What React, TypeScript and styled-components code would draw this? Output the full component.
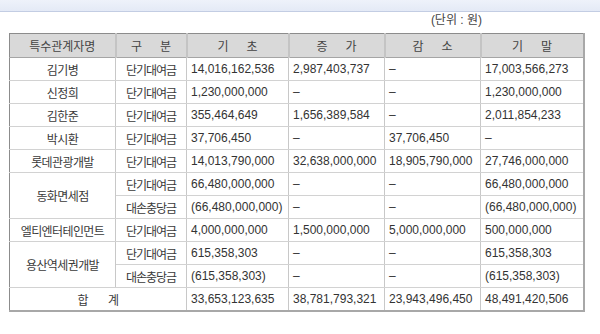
import React from "react";
import styled, { createGlobalStyle } from "styled-components";

const GlobalStyle = createGlobalStyle`
  body {
    margin: 0;
    background: #fff;
    font-family: "Liberation Sans", "Noto Sans CJK KR", sans-serif;
    color: #333;
  }
`;

const Page = styled.div`
  width: 600px;
  height: 334px;
  display: flex;
  flex-direction: column;
`;

const TopBand = styled.div`
  height: 11px;
  background: linear-gradient(#eef2fa, #e4eaf6);
  border-bottom: 1px solid #c3cde3;
`;

const Unit = styled.div`
  display: flex;
  justify-content: flex-end;
  padding: 1px 118px 0 0;
  height: 20px;
  font-size: 12px;
  line-height: 14px;
  color: #444;
`;

const Table = styled.table`
  margin-left: 9px;
  width: 574px;
  border-collapse: collapse;
  table-layout: fixed;
  font-size: 12px;
  border-top: 1px solid #8c8c8c;
  border-left: 1px solid #8c8c8c;
  border-right: 2px solid #a8a8a8;
  border-bottom: 2px solid #a8a8a8;
`;

const Th = styled.th`
  height: 23px;
  padding: 0;
  background: #d9d9d9;
  font-weight: normal;
  color: #444;
  border-bottom: 1px solid #a5a5a5;
  border-right: 2px solid #c4c4c4;
  &:last-child {
    border-right: none;
  }
`;

// spaced-out header words like "구   분"
const Spread = styled.span<{ $gap: number }>`
  display: flex;
  justify-content: center;
  gap: ${(p) => p.$gap}px;
`;

const Td = styled.td`
  height: 22px;
  padding: 0 0 0 4px;
  text-align: left;
  border-right: 1px solid #c8c8c8;
  border-bottom: 1px solid #d2d2d2;
  white-space: pre;
  color: #333;
  &:last-child {
    border-right: none;
  }
`;

const NameTd = styled(Td)`
  padding: 0;
  text-align: center;
  letter-spacing: -0.6px;
  color: #3a3a3a;
`;

const KindTd = styled(Td)`
  padding: 0;
  text-align: center;
  letter-spacing: -1px;
  color: #3a3a3a;
`;

type Row = {
  name?: string;
  span?: number;
  kind: string;
  vals: string[];
};

const D = "–";

const rows: Row[] = [
  { name: "김기병", kind: "단기대여금", vals: ["14,016,162,536", "2,987,403,737", D, "17,003,566,273"] },
  { name: "신정희", kind: "단기대여금", vals: ["1,230,000,000", D, D, "1,230,000,000"] },
  { name: "김한준", kind: "단기대여금", vals: ["355,464,649", "1,656,389,584", D, "2,011,854,233"] },
  { name: "박시환", kind: "단기대여금", vals: ["37,706,450", D, "37,706,450", D] },
  { name: "롯데관광개발", kind: "단기대여금", vals: ["14,013,790,000", "32,638,000,000", "18,905,790,000", "27,746,000,000"] },
  { name: "동화면세점", span: 2, kind: "단기대여금", vals: ["66,480,000,000", D, D, "66,480,000,000"] },
  { kind: "대손충당금", vals: ["(66,480,000,000)", D, D, "(66,480,000,000)"] },
  { name: "엘티엔터테인먼트", kind: "단기대여금", vals: ["4,000,000,000", "1,500,000,000", "5,000,000,000", "500,000,000"] },
  { name: "용산역세권개발", span: 2, kind: "단기대여금", vals: ["615,358,303", D, D, "615,358,303"] },
  { kind: "대손충당금", vals: ["(615,358,303)", D, D, "(615,358,303)"] },
];

const totals = ["33,653,123,635", "38,781,793,321", "23,943,496,450", "48,491,420,506"];

const heads: [string, string][] = [
  ["구", "분"],
  ["기", "초"],
  ["증", "가"],
  ["감", "소"],
  ["기", "말"],
];

const App = () => {
  return (
    <Page>
      <GlobalStyle />
      <TopBand />
      <Unit>(단위 : 원)</Unit>
      <Table>
        <colgroup>
          <col style={{ width: 106 }} />
          <col style={{ width: 71 }} />
          <col style={{ width: 102 }} />
          <col style={{ width: 96 }} />
          <col style={{ width: 96 }} />
          <col style={{ width: 103 }} />
        </colgroup>
        <thead>
          <tr>
            <Th>특수관계자명</Th>
            {heads.map(([a, b], i) => (
              <Th key={i}>
                <Spread $gap={18}>
                  <span>{a}</span>
                  <span>{b}</span>
                </Spread>
              </Th>
            ))}
          </tr>
        </thead>
        <tbody>
          {rows.map((r, i) => (
            <tr key={i}>
              {r.name && <NameTd rowSpan={r.span ?? 1}>{r.name}</NameTd>}
              <KindTd>{r.kind}</KindTd>
              {r.vals.map((v, j) => (
                <Td key={j}>{v}</Td>
              ))}
            </tr>
          ))}
          <tr>
            <NameTd colSpan={2}>
              <Spread $gap={20}>
                <span>합</span>
                <span>계</span>
              </Spread>
            </NameTd>
            {totals.map((v, j) => (
              <Td key={j}>{v}</Td>
            ))}
          </tr>
        </tbody>
      </Table>
    </Page>
  );
};

export default App;
